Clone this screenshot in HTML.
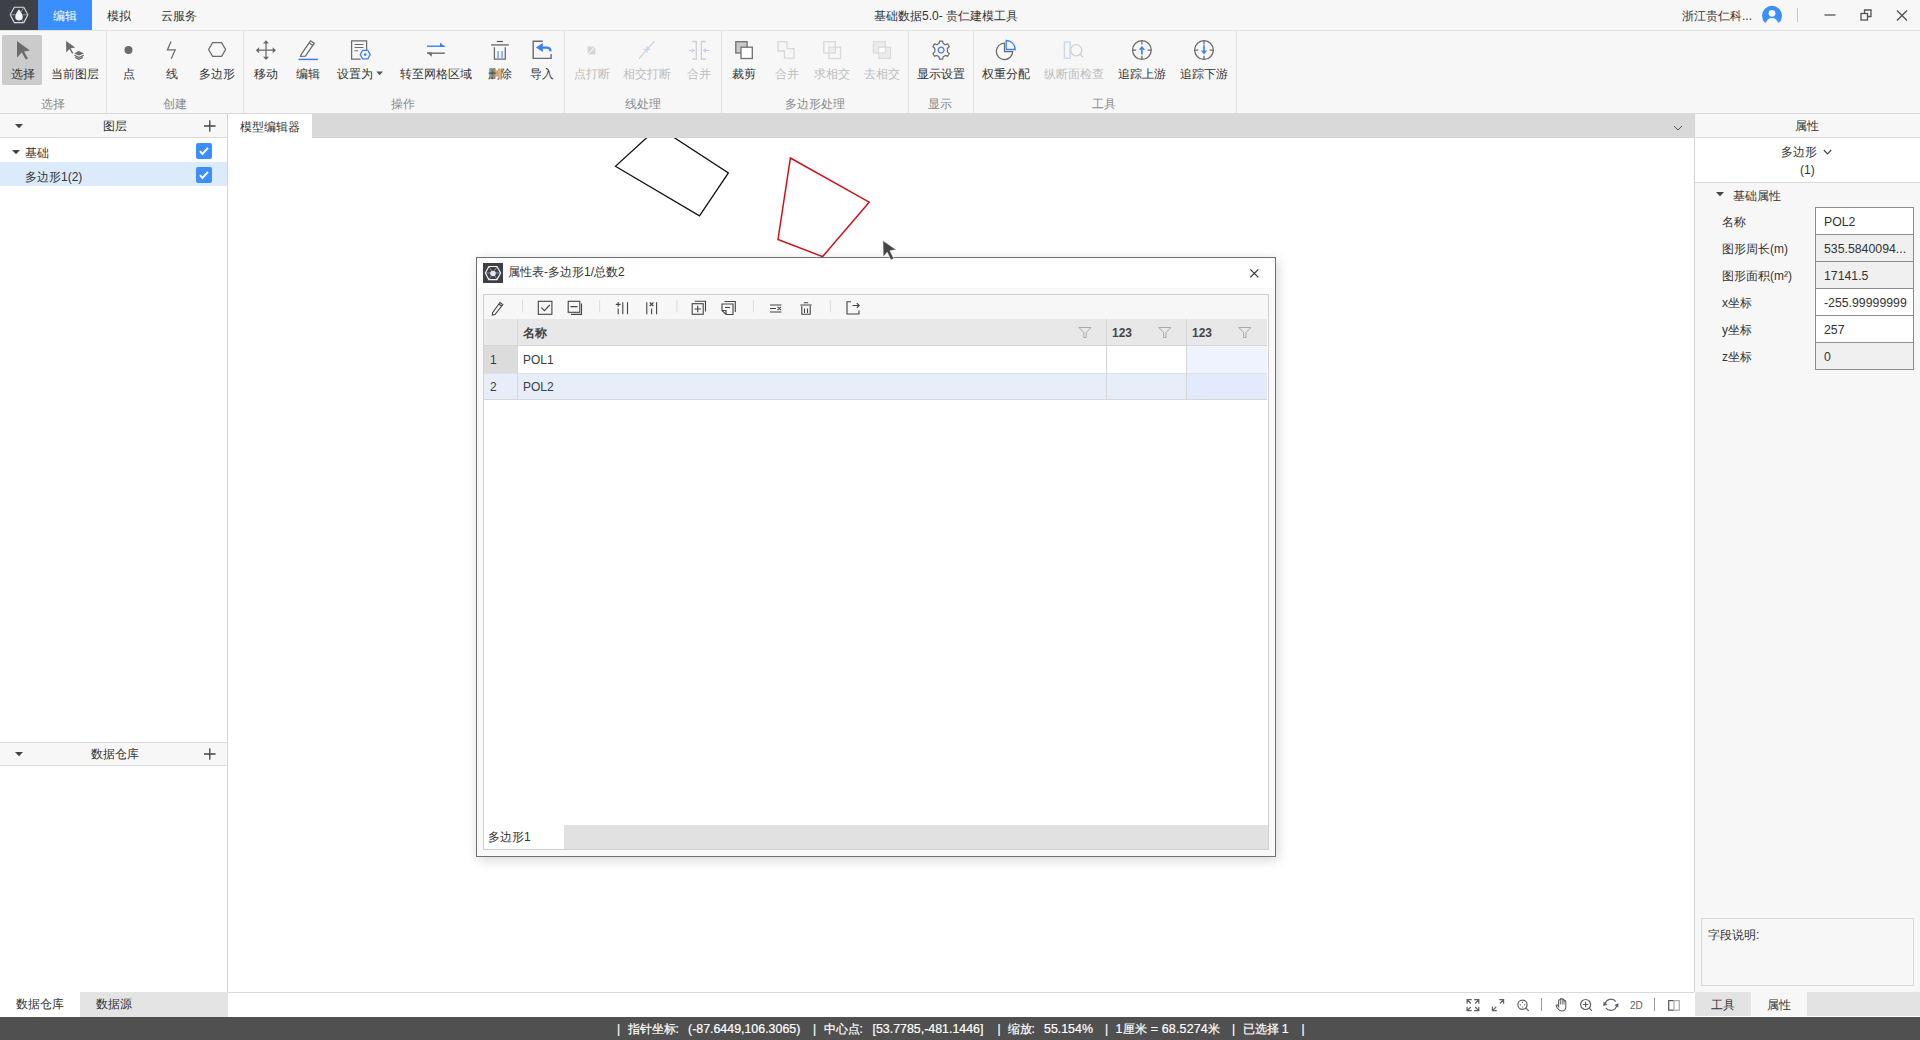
<!DOCTYPE html>
<html><head><meta charset="utf-8">
<style>
*{margin:0;padding:0;box-sizing:border-box}
html,body{width:1920px;height:1040px;overflow:hidden;background:#fff;font-family:"Liberation Sans",sans-serif;font-size:12px;color:#333}
.a{position:absolute}
.t{position:absolute;white-space:nowrap;line-height:1}
svg{position:absolute;overflow:visible}
.sb{position:absolute;top:1023px;white-space:nowrap;line-height:1;color:#fff;font-size:12px;-webkit-text-stroke:0.2px #fff}
.sn{font-size:12.4px}
.sep{position:absolute;top:31px;width:1px;height:82px;background:#e2e2e2}
.lbl{position:absolute;top:68px;white-space:nowrap;font-size:12px;line-height:12px;color:#333;transform:translateX(calc(-50% + 1px))}
.dis{color:#bdbdbd}
.grp{position:absolute;top:98px;font-size:12px;line-height:12px;color:#8a8a8a;white-space:nowrap;transform:translateX(-50%)}
.pl{position:absolute;left:1722px;font-size:12px;line-height:12px;color:#333;white-space:nowrap}
.pv{position:absolute;left:1815px;width:99px;height:28px;border:1px solid #8c8c8c;background:#fff;font-size:12.3px;line-height:28px;padding-left:8px;color:#333;white-space:nowrap;overflow:hidden}
.pv.ro{background:#f0f0f0}
</style></head><body>

<!-- Title bar -->
<div class="a" style="left:0;top:0;width:1920px;height:31px;background:#f7f7f7;border-bottom:1px solid #e3e3e3"></div>
<div class="a" style="left:0;top:0;width:38px;height:30px;background:#3d4049"></div>
<div class="a" style="left:38px;top:0;width:54px;height:30px;background:#3a8efe"></div>
<div class="t" style="left:53px;top:9.5px;font-size:12px;color:#fff">编辑</div>
<div class="t" style="left:107px;top:9.5px;font-size:12px;color:#333">模拟</div>
<div class="t" style="left:161px;top:9.5px;font-size:12px;color:#333">云服务</div>
<div class="t" style="left:874px;top:9.5px;font-size:12px;color:#333">基础数据5.0- 贵仁建模工具</div>
<div class="t" style="left:1682px;top:9.5px;font-size:12px;color:#333">浙江贵仁科...</div>
<svg style="left:0;top:0" width="1920" height="31" viewBox="0 0 1920 31">
  <!-- logo -->
  <polygon points="14.3,7.3 23.8,7.3 27.9,14.8 23.8,22.6 14.3,22.6 10.2,14.8" fill="none" stroke="#dcdcdc" stroke-width="1.1"/>
  <path d="M10.5 14.8 H16 M23.6 7.6 L20.6 12.5 M27.5 14.8 H22.5 M23.6 22.3 L21.5 19" stroke="#9a9ca3" stroke-width="0.9"/>
  <path d="M18.9 9.2 C17 12 15.2 14.5 15.2 17 C15.2 19.1 17 20.4 19 20.4 C21 20.4 22.8 19.1 22.8 17 C22.8 14.5 21 12 18.9 9.2Z" fill="#f4f4f4"/>
  <!-- avatar -->
  <circle cx="1772" cy="15.8" r="10" fill="#3a8efe"/>
  <rect x="1760" y="22.6" width="24" height="4" fill="#f7f7f7"/>
  <circle cx="1772" cy="13.3" r="3.4" fill="#f7f7f7"/>
  <path d="M1765.8 23 C1766.6 19.8 1769 17.9 1772 17.9 C1775 17.9 1777.4 19.8 1778.2 23 Z" fill="#f7f7f7"/>
  <line x1="1797.5" y1="8" x2="1797.5" y2="22" stroke="#c8c8c8" stroke-width="1"/>
  <!-- min -->
  <line x1="1824.5" y1="15" x2="1835.5" y2="15" stroke="#555" stroke-width="1.3"/>
  <!-- restore -->
  <rect x="1861" y="13.5" width="6.5" height="6.5" fill="none" stroke="#555" stroke-width="1.3"/>
  <path d="M1864.5 13.5 V10 H1871 V16.5 H1867.5" fill="none" stroke="#555" stroke-width="1.3"/>
  <!-- close -->
  <path d="M1897 10.5 L1907 20.5 M1907 10.5 L1897 20.5" stroke="#555" stroke-width="1.4"/>
</svg>

<!-- Ribbon -->
<div class="a" style="left:0;top:31px;width:1920px;height:83px;background:#f7f7f7;border-bottom:1px solid #d9d9d9"></div>
<div class="sep" style="left:106px"></div>
<div class="sep" style="left:243px"></div>
<div class="sep" style="left:564px"></div>
<div class="sep" style="left:721px"></div>
<div class="sep" style="left:908px"></div>
<div class="sep" style="left:973px"></div>
<div class="sep" style="left:1236px"></div>
<div class="a" style="left:2px;top:35px;width:40px;height:50px;background:#cbcbcb;border-radius:2px"></div>

<div class="lbl" style="left:22px">选择</div>
<div class="lbl" style="left:74px">当前图层</div>
<div class="lbl" style="left:128px">点</div>
<div class="lbl" style="left:171px">线</div>
<div class="lbl" style="left:216px">多边形</div>
<div class="lbl" style="left:265px">移动</div>
<div class="lbl" style="left:307px">编辑</div>
<div class="lbl" style="left:354px">设置为</div>
<div class="lbl" style="left:435px">转至网格区域</div>
<div class="lbl" style="left:499px">删除</div>
<div class="lbl" style="left:541px">导入</div>
<div class="lbl dis" style="left:591px">点打断</div>
<div class="lbl dis" style="left:646px">相交打断</div>
<div class="lbl dis" style="left:698px">合并</div>
<div class="lbl" style="left:743px">裁剪</div>
<div class="lbl dis" style="left:786px">合并</div>
<div class="lbl dis" style="left:831px">求相交</div>
<div class="lbl dis" style="left:881px">去相交</div>
<div class="lbl" style="left:940px">显示设置</div>
<div class="lbl" style="left:1005px">权重分配</div>
<div class="lbl dis" style="left:1073px">纵断面检查</div>
<div class="lbl" style="left:1141px">追踪上游</div>
<div class="lbl" style="left:1203px">追踪下游</div>

<div class="grp" style="left:53px">选择</div>
<div class="grp" style="left:175px">创建</div>
<div class="grp" style="left:403px">操作</div>
<div class="grp" style="left:643px">线处理</div>
<div class="grp" style="left:815px">多边形处理</div>
<div class="grp" style="left:940px">显示</div>
<div class="grp" style="left:1104px">工具</div>

<svg style="left:0;top:0" width="1300" height="114" viewBox="0 0 1300 114">
  <g fill="#6b6b6b">
    <!-- select arrow -->
    <path d="M17 41 L30 50.5 L24 51.5 L28 58.5 L25.8 59.6 L21.8 52.6 L17 57.6 Z"/>
    <!-- current layer arrow -->
    <path d="M66.1 41.1 L75.2 47.4 L70.6 48.2 L73.3 53.1 L72.1 53.8 L69.4 48.9 L66.2 52.4 Z"/>
    <path d="M78.9 51 L84 53.5 L78.9 55.6 L74.2 53.5 Z"/>
    <!-- point -->
    <circle cx="128.5" cy="49.9" r="4"/>
  </g>
  <g fill="none" stroke="#6b6b6b" stroke-width="1.25">
    <!-- line -->
    <path d="M171 41.4 L167.4 49.9 L175.2 49.9 L171.2 58.8"/>
    <!-- hexagon -->
    <polygon points="212.6,42.6 221.6,42.6 225.6,49.5 221.6,56.4 212.6,56.4 208.6,49.5"/>
    <!-- move -->
    <path d="M266 42 V58.5 M257.5 50.2 H274.5"/>
  </g>
  <g fill="#6b6b6b">
    <path d="M266 40.3 L269 43.6 L263 43.6Z M266 60 L269 56.7 L263 56.7Z M255.8 50.2 L259.1 47.2 L259.1 53.2Z M276 50.2 L272.7 47.2 L272.7 53.2Z"/>
  </g>
  <!-- edit pencil -->
  <g fill="none" stroke="#6b6b6b" stroke-width="1.25" stroke-linejoin="round">
    <path d="M310.5 40.8 L314.2 43.3 L305.4 56.2 L300.4 56.4 L301.7 53.6 Z"/>
    <path d="M309.2 42.9 L312.9 45.4"/>
  </g>
  <line x1="298.5" y1="59.4" x2="317.8" y2="59.4" stroke="#3a7efe" stroke-width="1.5"/>
  <!-- set as -->
  <g fill="none" stroke="#6b6b6b" stroke-width="1.25">
    <path d="M360.5 59 H351.6 V40.8 H366.6 V50"/>
  </g>
  <g stroke="#6b6b6b" stroke-width="1">
    <path d="M354.5 44.5 H363.5 M354.5 47.5 H363.5 M354.5 50.8 H358"/>
  </g>
  <polygon points="362.6,50.3 367.8,50.3 370.2,54.6 367.8,58.9 362.6,58.9 360.2,54.6" fill="#f7f7f7" stroke="#3a7efe" stroke-width="1.3"/>
  <circle cx="365.2" cy="54.6" r="1.3" fill="#3a7efe"/>
  <polygon points="376.3,71.4 383,71.4 379.65,75.2" fill="#555"/>
  <!-- transfer -->
  <path d="M427 46.2 H444.8" stroke="#3a7efe" stroke-width="1.4"/>
  <path d="M440 42.5 L444.8 46.9 L440 46.9Z" fill="#3a7efe"/>
  <path d="M427 53.2 H444.8" stroke="#6b6b6b" stroke-width="1.4"/>
  <path d="M431.8 56.8 L427 52.5 L431.8 52.5Z" fill="#6b6b6b"/>
  <!-- delete -->
  <path d="M491.1 44.9 H508.8" stroke="#8c8c8c" stroke-width="1.8"/>
  <path d="M496.8 41.5 H503" stroke="#555" stroke-width="1.2"/>
  <path d="M494.4 47.3 V59.2 H505.3 V47.3" fill="none" stroke="#6b6b6b" stroke-width="1.3"/>
  <path d="M498.1 51.1 V58.6 M502.1 51.1 V58.6" stroke="#7fa4fb" stroke-width="1.6"/>
  <!-- import -->
  <path d="M542.9 41.3 H533.2 V58.4 H551.1 V54" fill="none" stroke="#6b6b6b" stroke-width="1.4"/>
  <path d="M541 47.7 H546.5 C549 47.7 550.5 49 550.5 51.3" fill="none" stroke="#3a7efe" stroke-width="2.3"/>
  <path d="M536 47.5 L542.8 43.1 L542.8 51.9Z" fill="#3a7efe"/>
  <path d="M74.4 55.2 L78.9 57.5 L83.8 55.2 M75.2 57.4 L78.9 59.4 L82.9 57.4" fill="none" stroke="#6b6b6b" stroke-width="1.2"/>
  <!-- point break (disabled) -->
  <path d="M587.6 46.5 H595.4 V54.4 H587.6Z" fill="#d4d4d4"/>
  <path d="M587.2 54.8 L595.8 46.1" stroke="#f7f7f7" stroke-width="1.1"/>
  <!-- intersect break -->
  <path d="M639.2 58.7 L654.4 41.1" stroke="#d0d0d0" stroke-width="1.2"/>
  <path d="M643.7 49.3 H650.3 M647 46 V52.6" stroke="#c2d4f7" stroke-width="1.3"/>
  <!-- merge line -->
  <g fill="none" stroke="#cfcfcf" stroke-width="1.3">
    <path d="M692.2 41.5 H696.3 V59 H692.2 M705.7 41.5 H701.4 V59 H705.7"/>
  </g>
  <g fill="#b9cdf7">
    <path d="M689 49.9 H692.5 V51.1 H689Z M694.9 50.5 L691.8 48.3 L691.8 52.7Z"/>
    <path d="M705.8 49.9 H709.3 V51.1 H705.8Z M702.9 50.5 L706 48.3 L706 52.7Z"/>
  </g>
  <!-- clip -->
  <rect x="735.8" y="41.7" width="11.3" height="11.3" fill="#c9c9c9" stroke="#707070" stroke-width="1.3"/>
  <rect x="741" y="47.2" width="11.3" height="11.3" fill="#fff" stroke="#707070" stroke-width="1.3"/>
  <!-- union -->
  <path d="M778 41.7 H787 V48.6 H794 V58.2 H784.5 V51 H778Z" fill="none" stroke="#d8d8d8" stroke-width="1.3"/>
  <!-- intersect -->
  <rect x="823.8" y="41.7" width="11.5" height="11.3" fill="none" stroke="#d8d8d8" stroke-width="1.3"/>
  <rect x="829" y="47.2" width="11.5" height="11.3" fill="none" stroke="#d8d8d8" stroke-width="1.3"/>
  <rect x="829.6" y="47.8" width="5" height="4.6" fill="#ebebeb"/>
  <!-- xor -->
  <rect x="873.4" y="41.7" width="12" height="11.3" fill="#ebebeb" stroke="#dcdcdc" stroke-width="1.3"/>
  <rect x="878.6" y="47.2" width="12" height="11.3" fill="#ebebeb" stroke="#dcdcdc" stroke-width="1.3"/>
  <rect x="878.6" y="47.2" width="6.8" height="5.8" fill="#fff" stroke="#dcdcdc" stroke-width="1.3"/>
  <!-- gear -->
  <g transform="translate(941.1 50.1)">
    <path d="M-1.6 -9 H1.6 L2.1 -6.6 L4.3 -5.3 L6.6 -6.2 L8.2 -3.4 L6.3 -1.8 V1.8 L8.2 3.4 L6.6 6.2 L4.3 5.3 L2.1 6.6 L1.6 9 H-1.6 L-2.1 6.6 L-4.3 5.3 L-6.6 6.2 L-8.2 3.4 L-6.3 1.8 V-1.8 L-8.2 -3.4 L-6.6 -6.2 L-4.3 -5.3 L-2.1 -6.6 Z" fill="none" stroke="#6b6b6b" stroke-width="1.2" stroke-linejoin="round"/>
    <circle r="2.9" fill="none" stroke="#3a7efe" stroke-width="1.3"/>
  </g>
  <!-- pie -->
  <path d="M1004.5 51.5 V43.2 A8.2 8.2 0 1 0 1012.7 51.5 Z" fill="none" stroke="#6b6b6b" stroke-width="1.25"/>
  <path d="M1006.2 49.5 V40.5 A9 9 0 0 1 1015.2 49.5 Z" fill="none" stroke="#3a7efe" stroke-width="1.3"/>
  <!-- profile check -->
  <rect x="1064.3" y="42" width="5.8" height="16.2" fill="none" stroke="#c5d6f8" stroke-width="1.3"/>
  <circle cx="1076.2" cy="50.3" r="5.6" fill="none" stroke="#d0d0d0" stroke-width="1.3"/>
  <path d="M1080.2 54.4 L1083 57.4" stroke="#d0d0d0" stroke-width="1.3"/>
  <!-- trace up -->
  <g fill="none" stroke="#6b6b6b" stroke-width="1.25">
    <circle cx="1141.9" cy="50.1" r="9.4"/>
    <path d="M1141.9 40.7 V44.4 M1141.9 55.8 V59.5 M1132.5 50.1 H1136.2 M1147.6 50.1 H1151.3"/>
    <circle cx="1204" cy="50.1" r="9.4"/>
    <path d="M1204 40.7 V44.4 M1204 55.8 V59.5 M1194.6 50.1 H1198.3 M1209.7 50.1 H1213.4"/>
  </g>
  <g fill="#3a7efe">
    <path d="M1141.9 46 L1145 49.7 L1138.8 49.7Z"/>
    <rect x="1141.1" y="49.5" width="1.6" height="5"/>
    <path d="M1204 54.4 L1207.1 50.5 L1200.9 50.5Z"/>
    <rect x="1203.2" y="45.2" width="1.6" height="5.5"/>
  </g>
</svg>

<!-- Left panel -->
<div class="a" style="left:0;top:114px;width:228px;height:878px;background:#fff;border-right:1px solid #d4d4d4"></div>
<div class="a" style="left:0;top:114px;width:227px;height:24px;background:#f7f7f7;border-bottom:1px solid #dcdcdc"></div>
<div class="t" style="left:103px;top:120px">图层</div>
<div class="a" style="left:0;top:162px;width:227px;height:24px;background:#dcebfb"></div>
<div class="t" style="left:25px;top:147px">基础</div>
<div class="t" style="left:25px;top:171px">多边形1(2)</div>
<div class="a" style="left:196px;top:143px;width:16px;height:16px;background:#3a8efe;border-radius:2px"></div>
<div class="a" style="left:196px;top:167px;width:16px;height:16px;background:#3a8efe;border-radius:2px"></div>
<svg style="left:0;top:0" width="228" height="1040" viewBox="0 0 228 1040">
  <path d="M15 124 H23 L19 128.3Z" fill="#444"/>
  <path d="M12 150 H20 L16 154.3Z" fill="#444"/>
  <path d="M204 126 H215.6 M209.8 120.2 V131.8" stroke="#444" stroke-width="1.3"/>
  <path d="M200 151.2 L202.4 154 L208 147.8" fill="none" stroke="#fff" stroke-width="2"/>
  <path d="M200 175.2 L202.4 178 L208 171.8" fill="none" stroke="#fff" stroke-width="2"/>
</svg>

<div class="a" style="left:0;top:742px;width:227px;height:24px;background:#f7f7f7;border-top:1px solid #dcdcdc;border-bottom:1px solid #dcdcdc"></div>
<div class="t" style="left:91px;top:748px">数据仓库</div>
<svg style="left:0;top:0" width="228" height="1040" viewBox="0 0 228 1040">
  <path d="M15 752 H23 L19 756.3Z" fill="#444"/>
  <path d="M204 754 H215.6 M209.8 748.2 V759.8" stroke="#444" stroke-width="1.3"/>
</svg>

<!-- bottom tabs left -->
<div class="a" style="left:80px;top:992px;width:148px;height:25px;background:#e4e4e4"></div>
<div class="t" style="left:16px;top:998px">数据仓库</div>
<div class="t" style="left:96px;top:998px">数据源</div>

<!-- center tab bar -->
<div class="a" style="left:228px;top:114px;width:1466px;height:24px;background:#d9d9d9;border-left:1px solid #d2d2d2;border-bottom:1px solid #d4d4d4"></div>
<div class="a" style="left:228px;top:114px;width:84px;height:24px;background:#fff"></div>
<div class="t" style="left:240px;top:121px">模型编辑器</div>
<svg style="left:0;top:0" width="1700" height="140" viewBox="0 0 1700 140">
  <path d="M1674 126 L1678 130 L1682 126" fill="none" stroke="#555" stroke-width="1"/>
</svg>

<!-- canvas polygons -->
<svg style="left:0;top:0" width="1920" height="1040" viewBox="0 0 1920 1040">
  <defs><clipPath id="cv"><rect x="228" y="138" width="1466" height="854"/></clipPath></defs>
  <g clip-path="url(#cv)" fill="none" stroke-width="1.3" stroke-linejoin="miter">
    <polygon points="615.4,166.3 699.5,215.9 728.4,172.9 658.2,127.2" stroke="#111"/>
    <polygon points="790.4,158 869.2,202.2 822.6,256.6 778,239.4" stroke="#d0101a" stroke-width="1.5"/>
  </g>
</svg>

<!-- canvas bottom toolbar -->
<div class="a" style="left:228px;top:992px;width:1466px;height:1px;background:#d9d9d9"></div>
<svg style="left:0;top:0" width="1920" height="1040" viewBox="0 0 1920 1040">
  <g fill="none" stroke="#606060" stroke-width="1.2">
    <!-- fit -->
    <path d="M1467.1 1003.8 V999.6 H1471.7 M1467.4 999.9 L1470.8 1003.5 M1478.8 1003.8 V999.6 H1474.2 M1478.5 999.9 L1475.1 1003.5 M1467.1 1006.7 V1010.7 H1471.7 M1467.4 1010.4 L1470.8 1007 M1478.8 1006.7 V1010.7 H1474.2 M1478.5 1010.4 L1475.1 1007"/>
    <!-- expand -->
    <path d="M1499.2 999.6 H1503.6 V1003.8 M1503.3 999.9 L1499.9 1003.5 M1492.4 1006.5 V1010.7 H1496.8 M1492.7 1010.4 L1496.1 1007"/>
    <!-- zoom sel -->
    <circle cx="1522.5" cy="1004.7" r="4.6"/>
    <path d="M1525.9 1008.1 L1528.7 1010.9"/>
    <!-- zoom in -->
    <circle cx="1585.6" cy="1004.5" r="5"/>
    <path d="M1589.3 1008.2 L1591.9 1010.8 M1582.8 1004.5 H1588.4 M1585.6 1001.7 V1007.3"/>
    <!-- rotate -->
    <path d="M1605.2 1003.6 A6 6 0 0 1 1615.8 1001.6 M1616.6 1005.8 A6 6 0 0 1 1606 1008"/>
  </g>
  <g fill="#606060">
    <path d="M1522.5 1001.6 L1523.5 1003 L1521.5 1003Z M1522.5 1007.8 L1523.5 1006.4 L1521.5 1006.4Z M1519.4 1004.7 L1520.8 1003.7 L1520.8 1005.7Z M1525.6 1004.7 L1524.2 1003.7 L1524.2 1005.7Z"/>
    <path d="M1603.5 1001.8 L1607.5 1004.5 L1603.3 1006.2Z"/>
    <path d="M1618.2 1007.5 L1614.3 1004.9 L1618.5 1003.2Z"/>
  </g>
  <g fill="none" stroke-width="1.2">
    <path d="M1674 1000.6 H1668.7 V1010.2 H1674" stroke="#555"/>
    <path d="M1674 1000.6 H1679.3 V1010.2 H1674" stroke="#aaa"/>
    <path d="M1674 1000.4 V1010.4" stroke="#bdbdbd" stroke-width="1.6"/>
  </g>
  <path d="M1541.5 998 V1011 M1654.5 998 V1011" stroke="#999" stroke-width="1"/>
  <!-- hand -->
  <path d="M1558.6 1006.5 V1000.6 a0.9 0.9 0 0 1 1.8 0 V999.5 a0.9 0.9 0 0 1 1.8 0 V1000 a0.9 0.9 0 0 1 1.8 0 V1001.5 a0.9 0.9 0 0 1 1.8 0 V1006.5 C1565.8 1009.5 1564 1011 1561.8 1011 C1559.8 1011 1558.6 1010 1557.2 1008 L1556.2 1005.8 a0.8 0.8 0 0 1 1.4 -0.7 Z" fill="none" stroke="#606060" stroke-width="1.1"/>
  <path d="M1560.4 1000.6 V1004.5 M1562.2 999.5 V1004.5 M1564 1000 V1004.5" stroke="#606060" stroke-width="0.9"/>
</svg>
<div class="t" style="left:1630px;top:1001px;font-size:10px;color:#606060">2D</div>

<!-- right panel -->
<div class="a" style="left:1694px;top:114px;width:226px;height:878px;background:#f7f7f7;border-left:1px solid #d4d4d4"></div>
<div class="a" style="left:1695px;top:114px;width:225px;height:24px;background:#f7f7f7;border-bottom:1px solid #dcdcdc"></div>
<div class="t" style="left:1795px;top:120px">属性</div>
<div class="a" style="left:1695px;top:138px;width:225px;height:45px;background:#fff;border-bottom:1px solid #d8d8d8"></div>
<div class="t" style="left:1781px;top:146px">多边形</div>
<div class="t" style="left:1800px;top:164px">(1)</div>
<svg style="left:0;top:0" width="1920" height="200" viewBox="0 0 1920 200">
  <path d="M1823.8 150 L1827.5 153.8 L1831.2 150" fill="none" stroke="#444" stroke-width="1.2"/>
  <path d="M1716 192 H1724 L1720 196.3Z" fill="#444"/>
</svg>
<div class="t" style="left:1733px;top:190px">基础属性</div>
<div class="pl" style="top:216px">名称</div>
<div class="pl" style="top:243px">图形周长(m)</div>
<div class="pl" style="top:270px">图形面积(m²)</div>
<div class="pl" style="top:297px">x坐标</div>
<div class="pl" style="top:324px">y坐标</div>
<div class="pl" style="top:351px">z坐标</div>
<div class="pv" style="top:207px">POL2</div>
<div class="pv ro" style="top:234px">535.5840094...</div>
<div class="pv ro" style="top:261px">17141.5</div>
<div class="pv" style="top:288px"><div style="width:86px;overflow:hidden">-255.99999999</div></div>
<div class="pv" style="top:315px">257</div>
<div class="pv ro" style="top:342px">0</div>

<div class="a" style="left:1701px;top:918px;width:213px;height:68px;border:1px solid #d8d8d8;background:#f7f7f7"></div>
<div class="t" style="left:1708px;top:929px">字段说明:</div>
<div class="a" style="left:1695px;top:992px;width:225px;height:24px;background:#e3e3e3"></div>
<div class="a" style="left:1751px;top:992px;width:56px;height:24px;background:#f7f7f7"></div>
<div class="t" style="left:1711px;top:999px">工具</div>
<div class="t" style="left:1767px;top:999px">属性</div>

<!-- status bar -->
<div class="a" style="left:0;top:1017px;width:1920px;height:23px;background:#505050"></div>
<div class="sb" style="left:617px">|</div>
<div class="sb" style="left:627.5px">指针坐标:</div>
<div class="sb sn" style="left:688px">(-87.6449,106.3065)</div>
<div class="sb" style="left:813px">|</div>
<div class="sb" style="left:823.5px">中心点:</div>
<div class="sb sn" style="left:872.5px">[53.7785,-481.1446]</div>
<div class="sb" style="left:997.5px">|</div>
<div class="sb" style="left:1007.5px">缩放:</div>
<div class="sb sn" style="left:1044px">55.154%</div>
<div class="sb" style="left:1105px">|</div>
<div class="sb sn" style="left:1115.5px;letter-spacing:0.2px">1<span style="font-size:12px">厘米</span> = 68.5274<span style="font-size:12px">米</span></div>
<div class="sb" style="left:1232px">|</div>
<div class="sb" style="left:1242.5px">已选择 <span class="sn" style="font-size:12.4px">1</span></div>
<div class="sb" style="left:1301.5px">|</div>

<!-- DIALOG -->
<div class="a" style="left:476px;top:257px;width:800px;height:600px;background:#f9f9f9;border:1px solid #707070;box-shadow:2px 3px 11px rgba(0,0,0,0.16)"></div>
<div class="a" style="left:477px;top:258px;width:798px;height:30px;background:#fff"></div>
<div class="a" style="left:483px;top:263px;width:20px;height:20px;background:#3d4049"></div>
<svg style="left:0;top:0" width="1920" height="1040" viewBox="0 0 1920 1040">
  <path d="M485.6 273 H500.4 M489 266.7 L497 279.4 M497 266.7 L489 279.4" stroke="#9a9ca3" stroke-width="0.9"/>
  <polygon points="488.8,266.5 497,266.5 500.6,273 497,279.6 488.8,279.6 485.4,273" fill="none" stroke="#f2f2f2" stroke-width="1.2"/>
  <circle cx="493" cy="273.5" r="2.8" fill="#e6e6e6"/>
  <path d="M1250.3 269.3 L1258.3 277.3 M1258.3 269.3 L1250.3 277.3" stroke="#333" stroke-width="1.2"/>
</svg>
<div class="t" style="left:508px;top:266px">属性表-多边形1/总数2</div>

<!-- grid container -->
<div class="a" style="left:483px;top:294px;width:786px;height:556px;background:#fff;border:1px solid #d0d0d0"></div>
<div class="a" style="left:484px;top:295px;width:784px;height:24px;background:#f7f7f7"></div>
<!-- header -->
<div class="a" style="left:484px;top:319px;width:783px;height:27px;background:#e8e8e8;border-bottom:1px solid #d6d6d6"></div>
<div class="a" style="left:517px;top:319px;width:1px;height:81px;background:#d6d6d6"></div>
<div class="a" style="left:1106px;top:319px;width:1px;height:81px;background:#d6d6d6"></div>
<div class="a" style="left:1186px;top:319px;width:1px;height:81px;background:#d6d6d6"></div>
<div class="a" style="left:484px;top:346px;width:33px;height:27px;background:#dcdcdc"></div>
<div class="a" style="left:1187px;top:346px;width:80px;height:27px;background:#eef3fd"></div>
<div class="a" style="left:484px;top:373px;width:783px;height:27px;background:#e8eef9;border-bottom:1px solid #d6d6d6;border-top:1px solid #dde3ee"></div>
<div class="a" style="left:1187px;top:374px;width:80px;height:25px;background:#e2eafb"></div>
<div class="a" style="left:517px;top:373px;width:1px;height:27px;background:#d6d6d6"></div>
<div class="a" style="left:1106px;top:373px;width:1px;height:27px;background:#d6d6d6"></div>
<div class="a" style="left:1186px;top:373px;width:1px;height:27px;background:#d6d6d6"></div>
<div class="t" style="left:523px;top:327px;font-weight:bold;color:#444">名称</div>
<div class="t" style="left:1112px;top:327px;font-weight:bold;color:#444">123</div>
<div class="t" style="left:1192px;top:327px;font-weight:bold;color:#444">123</div>
<div class="t" style="left:490px;top:354px;color:#3c3c3c">1</div>
<div class="t" style="left:490px;top:381px;color:#3c3c3c">2</div>
<div class="t" style="left:523px;top:354px;color:#3c3c3c">POL1</div>
<div class="t" style="left:523px;top:381px;color:#3c3c3c">POL2</div>
<!-- sheet tab -->
<div class="a" style="left:564px;top:825px;width:704px;height:24px;background:#e1e1e1"></div>
<div class="t" style="left:488px;top:831px">多边形1</div>

<svg style="left:0;top:0" width="1920" height="1040" viewBox="0 0 1920 1040">
  <g fill="none" stroke="#aaa" stroke-width="1">
    <path d="M1079 327.5 H1091 L1086.2 332.5 V337.5 H1083.8 V332.5 Z"/>
    <path d="M1158.8 327.5 H1170.8 L1166 332.5 V337.5 H1163.6 V332.5 Z"/>
    <path d="M1238.8 327.5 H1250.8 L1246 332.5 V337.5 H1243.6 V332.5 Z"/>
  </g>
  <g fill="none" stroke="#444" stroke-width="1.1">
    <!-- pencil -->
    <path d="M500 302.5 L502.8 304.5 L495 314.5 L492.3 315 L492.7 312.4 Z M498.8 304 L501.6 306"/>
    <!-- check -->
    <rect x="538.3" y="301.3" width="13.6" height="13"/>
    <path d="M541.3 307.6 L544.4 310.6 L549.8 305"/>
    <!-- deselect -->
    <rect x="568.2" y="301.3" width="11.6" height="11"/>
    <path d="M570.5 306.6 H577.5 M581.5 303.5 V314.4 H571"/>
    <!-- add col -->
    <path d="M618.2 302 V306.8 M615.8 304.4 H620.6 M618.2 308.5 V314.3 M622.8 302.3 V314.3 M627.5 302.3 V314.3"/>
    <!-- del col -->
    <path d="M646.8 302.3 V314.3 M651.6 308.5 V314.3 M656.6 302.3 V314.3 M649.8 302.5 L653.4 306 M653.4 302.5 L649.8 306"/>
    <!-- add row -->
    <rect x="692.2" y="303.7" width="11" height="10.6"/>
    <path d="M694.5 309 H701 M697.7 305.8 V312.2 M694.8 301.2 H705.5 V311.5"/>
    <!-- copy -->
    <path d="M722 304 H733 V314.5 H726 L722 310.5 Z M722 310.5 H726 V314.5 M724.5 301.5 H735.3 V312"/>
    <path d="M725 307.5 H730" />
    <!-- clear -->
    <path d="M770 305 H781.5 M770 308.5 H776 M770 312 H781.5 M777.5 306.8 L781 310.2 M781 306.8 L777.5 310.2"/>
    <!-- trash -->
    <path d="M800.3 305 H811.8 M803.8 302.8 H808.2 M801.8 306 V314.2 H810.2 V306"/>
    <path d="M804.5 308.5 V313 M807.5 308.5 V313"/>
    <!-- export -->
    <path d="M851 301.7 H847 V314 H859 V310.5 M852.5 305.5 H859 M856.8 303.2 L859.2 305.5 L856.8 307.8"/>
  </g>
  <path d="M522.5 300 V312.5 M599.6 300 V312.5 M676.9 300 V312.5 M753.4 300 V312.5 M830.3 300 V312.5" stroke="#ddd" stroke-width="1"/>
</svg>

<!-- mouse cursor -->
<svg style="left:0;top:0" width="1920" height="1040" viewBox="0 0 1920 1040">
  <path d="M882.9 240.6 L896.3 249.8 L890 250.8 L893.8 258.6 L890.8 260 L887.2 252.3 L883.2 257.1 Z" fill="#444" stroke="#fff" stroke-width="0.6"/>
</svg>

</body></html>
